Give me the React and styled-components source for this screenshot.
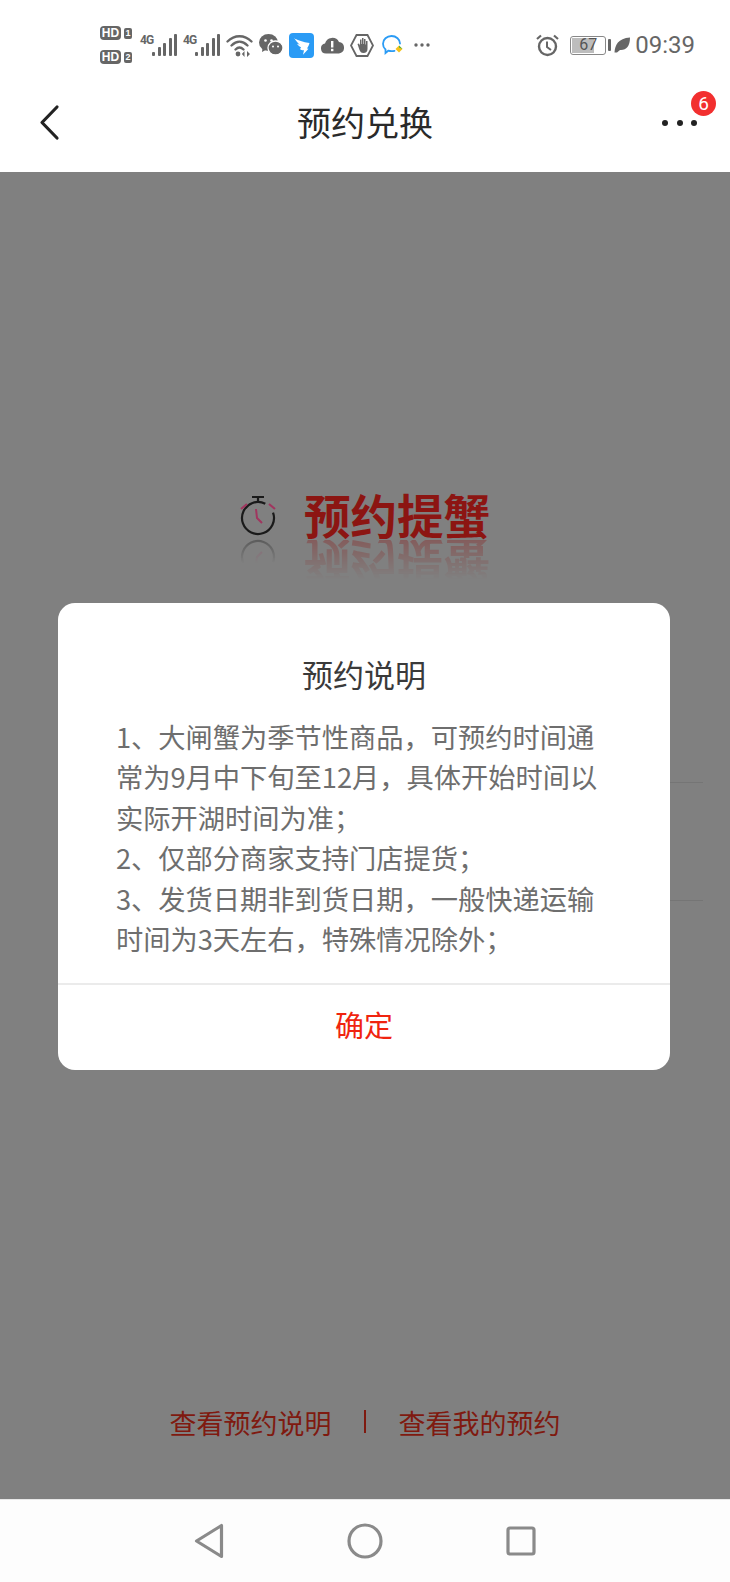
import React from "react";
import styled, { createGlobalStyle } from "styled-components";

const Global = createGlobalStyle`
  html, body { margin: 0; padding: 0; background: #808080; }
  * { box-sizing: border-box; }
`;
const cjk = `"Noto Sans CJK SC", "Noto Sans", sans-serif`;
const Phone = styled.div`
  position: relative; width: 730px; height: 1582px; display: flex; flex-direction: column;
  overflow: hidden; font-family: ${cjk};
`;
const Top = styled.header`background: #fff; height: 172px; display: flex; flex-direction: column; flex: none;`;
const StatusBar = styled.div`height: 77px; display: flex; align-items: center; padding: 13px 35px 0 100px; flex: none; color: #666;`;
const Icon = styled.svg`flex: none; margin-left: ${p => p.$gap || 0}px; display: block;`;
const HdStack = styled.div`display: flex; flex-direction: column; gap: 10px; width: 33px; flex: none;`;
const HdRow = styled.div`display: flex; align-items: center; gap: 3px;`;
const HdBadge = styled.span`
  width: 21px; height: 14px; background: #666; color: #fff; border-radius: 4px; font: 700 12px/14px "Liberation Sans", sans-serif; text-align: center;
`;
const SimBadge = styled.span`
  width: 8px; height: 11px; background: #666; color: #fff; border-radius: 2px; font: 700 9px/11px "Liberation Sans", sans-serif; text-align: center;
`;
const Signal = styled.div`display: flex; align-items: flex-end; margin-left: ${p => p.$gap}px; height: 23px; flex: none;`;
const NetLabel = styled.span`font: 700 12px/12px "Roboto", sans-serif; color: #666; align-self: flex-start; width: 12px; letter-spacing: -0.8px; white-space: nowrap;`;
const Bars = styled.div`display: flex; align-items: flex-end; gap: 2.5px; margin-bottom: 1px;`;
const Bar = styled.i`display: block; width: 3px; height: ${p => p.$h}px; background: #666; border-radius: 1px;`;
const StatusRight = styled.div`margin-left: auto; display: flex; align-items: center;`;
const Battery = styled.div`
  position: relative; width: 36px; height: 19px; margin-left: 11px; border: 1.5px solid #888; border-radius: 3px; padding: 1px; flex: none;
`;
const BatteryFill = styled.div`
  width: 67%; height: 100%; background: #bdbdbd; 
`;
const BatteryValue = styled.span`
  position: absolute; inset: 0; text-align: center; font: 400 16px/16px "Roboto", sans-serif; color: #555;
`;
const BatteryTip = styled.i`display: block; width: 3px; height: 12px; background: #666; margin-left: 2px; border-radius: 1px;`;
const Time = styled.span`font: 400 24px/28px "Roboto", sans-serif; color: #666; margin-left: 5px;`;
const Nav = styled.nav`position: relative; flex: 1; display: flex; align-items: center; justify-content: center;`;
const NavTitle = styled.h1`margin: 0 0 6px; font-size: 34px; line-height: 46px; font-weight: 400; color: #2a2a2a;`;
const NavBack = styled.svg`position: absolute; left: 36px; top: 25px;`;
const NavMore = styled.svg`position: absolute; left: 660px; top: 40px;`;
const Badge = styled.span`
  position: absolute; left: 691px; top: 14px; width: 25px; height: 25px; border-radius: 50%; background: #f22f2f; color: #fff;
  font: 400 19px/25px "Roboto", sans-serif; text-align: center;
`;
const Main = styled.main`flex: 1; background: #808080; display: flex; flex-direction: column; align-items: stretch; min-height: 0;`;
const Logo = styled.div`margin-top: 319px; display: flex; align-items: flex-start; padding-left: 238px; gap: 26px; height: 92px;`;
const LogoMark = styled.div`display: flex; flex-direction: column; width: 40px; flex: none; margin-top: 3px;`;
const MarkMirror = styled.svg`transform: scaleY(-1); margin-top: -1px; opacity: .4; -webkit-mask-image: linear-gradient(to top, #000, transparent 60%); mask-image: linear-gradient(to top, #000, transparent 60%);`;
const LogoWords = styled.div`display: flex; flex-direction: column;`;
const LogoText = styled.div`font-size: 46.5px; line-height: 46px; font-weight: 700; color: #8c1512; white-space: nowrap;`;
const LogoMirror = styled(LogoText)`
  transform: scaleY(-1); margin-top: 3px; opacity: .32; -webkit-mask-image: linear-gradient(to top, #000, transparent 85%); mask-image: linear-gradient(to top, #000, transparent 85%);
`;
const Rows = styled.div`margin-top: 199px; margin-left: 60px; width: 643px; display: flex; flex-direction: column; gap: 117px;`;
const RowLine = styled.div`height: 1px; background: #757575;`;
const Links = styled.div`margin-top: auto; height: 94px; display: flex; justify-content: center; align-items: flex-start; color: #7f1a10; font-size: 27px; line-height: 36px; font-weight: 400;`;
const LinkDivider = styled.i`display: block; width: 2px; height: 23px; background: #7f1a10; margin: 5px 33px 0 32px;`;
const BottomBar = styled.footer`height: 83px; flex: none; background: #fdfdfd; display: flex; align-items: center; justify-content: center; gap: 123px; border-top: 1px solid #e8e8e8;`;
const Modal = styled.section`
  position: absolute; left: 58px; top: 603px; width: 612px; height: 467px; background: #fff; border-radius: 17px; display: flex; flex-direction: column;
`;
const ModalTitle = styled.h2`margin: 49px 0 0; height: 44px; text-align: center; font-size: 31px; line-height: 44px; font-weight: 400; color: #3a3a3a;`;
const ModalBody = styled.div`margin-top: 20px; padding: 0 54px 0 58px; color: #6e6e6e; font-size: 27.25px; line-height: 40.4px; height: 267px;`;
const ModalLine = styled.p`margin: 0;`;
const ModalAction = styled.div`
  border-top: 2px solid #ebebeb; flex: 1; text-align: center; color: #f0240f; font-size: 29px; line-height: 78px;
`;

const Clock = () => (
  <>
    <circle cx="20" cy="24" r="16" fill="none" stroke="#1a1a1a" strokeWidth="2.2" strokeDasharray="88 12" transform="rotate(-20 20 24)" />
    <path d="M14 3h12M20 3v5" stroke="#1a1a1a" strokeWidth="2.2" fill="none" />
    <path d="M3 15l6-5M37 15l-6-5" stroke="#a0365f" strokeWidth="2.2" fill="none" />
    <path d="M18 15l1 9 5 5" stroke="#a0365f" strokeWidth="2" fill="none" />
  </>
);

const SignalIcon = ({ gap }) => (
  <Signal $gap={gap}>
    <NetLabel>4G</NetLabel>
    <Bars>
      {[4, 9, 13, 18, 22].map(h => <Bar key={h} $h={h} />)}
    </Bars>
  </Signal>
);

export default function App() {
  return (
    <Phone>
      <Global />
      <Top>
        <StatusBar>
          <HdStack>
            <HdRow><HdBadge>HD</HdBadge><SimBadge>1</SimBadge></HdRow>
            <HdRow><HdBadge>HD</HdBadge><SimBadge>2</SimBadge></HdRow>
          </HdStack>
          <SignalIcon gap={7} />
          <SignalIcon gap={6} />
          <Icon $gap={6} width="27" height="24" viewBox="0 0 27 24" fill="none">
            <path d="M1.5 8.5C8.5 1.5 18.5 1.5 25.5 8.5M5.5 12.5C10.5 7.5 16.5 7.5 21.5 12.5M9.5 16.5C12 14 15 14 17.5 16.5" stroke="#666" strokeWidth="2.3" strokeLinecap="round" />
            <circle cx="12" cy="21" r="2.4" fill="#666" />
            <path d="M18.5 18v6l-2.6-3zM21 18v6l3-3z" fill="#666" />
          </Icon>
          <Icon $gap={6} width="24" height="22" viewBox="0 0 24 22">
            <ellipse cx="9.500" cy="8.500" rx="9.500" ry="8.500" fill="#666" />
            <path d="M3.500 13.500L3 18l4.500-2.500z" fill="#666" />
            <ellipse cx="16.500" cy="14" rx="7.500" ry="7" fill="#666" stroke="#fff" strokeWidth="1.300" />
            <circle cx="6.500" cy="6.500" r="1.300" fill="#fff" /><circle cx="12.500" cy="6.500" r="1.300" fill="#fff" />
            <circle cx="14" cy="12.500" r="1" fill="#fff" /><circle cx="19" cy="12.500" r="1" fill="#fff" />
          </Icon>
          <Icon $gap={6} width="25" height="25" viewBox="0 0 25 25">
            <rect width="25" height="25" rx="4" fill="#2a9bf5" />
            <path d="M5 5c4 2.500 9 4 15.500 5-.5 2-1.500 4-2.500 5.500l1.500.2-5.500 6 1-4.500c-2 0-3.500-.5-4-1l1-2c-2-1-3.500-2.500-4-3.500 1 .5 2 .8 3 1-2-1.500-4.500-4-5.500-6.700z" fill="#fff" />
          </Icon>
          <Icon $gap={7} width="23" height="18" viewBox="0 0 23 18">
            <path d="M5 17.500a5 5 0 0 1-1-9.900A7.500 7.500 0 0 1 18 6a5.800 5.800 0 0 1 0 11.500z" fill="#666" />
            <rect x="10" y="5" width="2.400" height="6.500" fill="#fff" /><rect x="10" y="12.800" width="2.400" height="2.400" fill="#fff" />
          </Icon>
          <Icon $gap={6} width="24" height="25" viewBox="0 0 24 25" fill="none">
            <path d="M6.500 2h11L23 12.500 17.500 23h-11L1 12.500z" stroke="#666" strokeWidth="1.800" />
            <path d="M7.500 11l1.500-.5 1 2V6.500h1.500V11h.5V5h1.500v6h.5V6h1.500v5.500h.5V8h1.500v8c0 2.500-1.500 4-4 4s-3-1-4-3z" fill="#666" />
          </Icon>
          <Icon $gap={8} width="21" height="20" viewBox="0 0 21 20" fill="none">
            <path d="M12.500 15.800c-1 .3-2 .4-3 .4-1 0-2-.1-3.300-.5L3.500 18v-3.500C1.800 13 1 11 1 8.700 1 4.500 4.800 1 9.500 1S18 4.500 18 8.500" stroke="#2a9bf5" strokeWidth="1.800" strokeLinecap="round" />
            <path d="M17 10.500l3.500 3.500-3.500 3.500-3.500-3.500z" fill="#f5c21b" />
            <path d="M17 10.500l3.500 3.500-3.500-1.500z" fill="#3db24b" />
          </Icon>
          <Icon $gap={11} width="16" height="4" viewBox="0 0 16 4">
            <circle cx="2" cy="2" r="1.700" fill="#666" /><circle cx="8" cy="2" r="1.700" fill="#666" /><circle cx="14" cy="2" r="1.700" fill="#666" />
          </Icon>
          <StatusRight>
            <Icon width="23" height="23" viewBox="0 0 23 23" fill="none">
              <circle cx="11.500" cy="12.500" r="8.500" stroke="#666" strokeWidth="2.400" />
              <path d="M11 7.500v5.500l4 3" stroke="#666" strokeWidth="2" />
              <path d="M1 5l4-3.500M22 5l-4-3.500" stroke="#666" strokeWidth="2.200" />
            </Icon>
            <Battery><BatteryFill /><BatteryValue>67</BatteryValue></Battery>
            <BatteryTip />
            <Icon $gap={3} width="16" height="16" viewBox="0 0 16 16">
              <path d="M0.500 15.500C1 8 4 1.500 16 0.500c0 9-4 13-10 12.500L3 15.500z" fill="#666" />
            </Icon>
            <Time>09:39</Time>
          </StatusRight>
        </StatusBar>
        <Nav>
          <NavBack width="28" height="40" viewBox="0 0 28 40" fill="none">
            <path d="M21 5L6 20.500 21 36" stroke="#222" strokeWidth="3.200" strokeLinecap="round" strokeLinejoin="round" />
          </NavBack>
          <NavTitle>预约兑换</NavTitle>
          <NavMore width="40" height="12" viewBox="0 0 40 12">
            <circle cx="5" cy="6" r="3" fill="#222" /><circle cx="20" cy="6" r="3" fill="#222" /><circle cx="34" cy="6" r="3" fill="#222" />
          </NavMore>
          <Badge>6</Badge>
        </Nav>
      </Top>
      <Main>
        <Logo>
          <LogoMark>
            <svg width="40" height="44" viewBox="0 0 40 44"><Clock /></svg>
            <MarkMirror width="40" height="44" viewBox="0 0 40 44"><Clock /></MarkMirror>
          </LogoMark>
          <LogoWords>
            <LogoText>预约提蟹</LogoText>
            <LogoMirror aria-hidden="true">预约提蟹</LogoMirror>
          </LogoWords>
        </Logo>
        <Rows><RowLine /><RowLine /></Rows>
        <Links>
          <span>查看预约说明</span>
          <LinkDivider />
          <span>查看我的预约</span>
        </Links>
      </Main>
      <BottomBar>
        <svg width="30" height="36" viewBox="0 0 30 36" fill="none">
          <path d="M27.500 2.500v31L2.500 18z" stroke="#8a8a8a" strokeWidth="3.200" strokeLinejoin="round" />
        </svg>
        <svg width="36" height="36" viewBox="0 0 36 36" fill="none">
          <circle cx="18" cy="18" r="16" stroke="#8a8a8a" strokeWidth="3.200" />
        </svg>
        <svg width="30" height="30" viewBox="0 0 30 30" fill="none">
          <rect x="2" y="2" width="26" height="26" rx="2" stroke="#8a8a8a" strokeWidth="3.200" />
        </svg>
      </BottomBar>
      <Modal>
        <ModalTitle>预约说明</ModalTitle>
        <ModalBody>
          <ModalLine>1、大闸蟹为季节性商品，可预约时间通常为9月中下旬至12月，具体开始时间以实际开湖时间为准；</ModalLine>
          <ModalLine>2、仅部分商家支持门店提货；</ModalLine>
          <ModalLine>3、发货日期非到货日期，一般快递运输时间为3天左右，特殊情况除外；</ModalLine>
        </ModalBody>
        <ModalAction>确定</ModalAction>
      </Modal>
    </Phone>
  );
}
